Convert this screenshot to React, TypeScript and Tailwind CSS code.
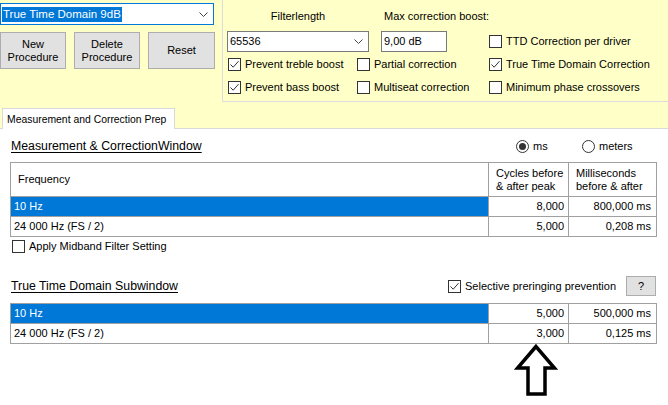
import React from "react";

function Check({ checked }: { checked?: boolean }) {
  return (
    <span className="w-[13px] h-[13px] border border-[#333] bg-white flex items-center justify-center shrink-0">
      {checked && (
        <svg width="11" height="11" viewBox="0 0 11 11">
          <path d="M1.5 5.5 L4.2 8.2 L9.5 2.2" stroke="#333" fill="none" strokeWidth="1" />
        </svg>
      )}
    </span>
  );
}

function CheckItem({ label, checked, className = "" }: { label: string; checked?: boolean; className?: string }) {
  return (
    <div className={`flex items-center gap-[4px] ${className}`}>
      <Check checked={checked} />
      <span className="whitespace-nowrap">{label}</span>
    </div>
  );
}

function Radio({ label, checked, className = "" }: { label: string; checked?: boolean; className?: string }) {
  return (
    <div className={`flex items-center gap-[4px] ${className}`}>
      <span className="w-[13px] h-[13px] rounded-full border border-[#333] bg-white flex items-center justify-center shrink-0">
        {checked && <span className="w-[7px] h-[7px] rounded-full bg-[#333]" />}
      </span>
      <span>{label}</span>
    </div>
  );
}

function Chevron() {
  return (
    <svg width="9" height="5" viewBox="0 0 9 5" className="ml-auto shrink-0">
      <path d="M0.5 0.5 L4.5 4.5 L8.5 0.5" stroke="#444" fill="none" strokeWidth="1" />
    </svg>
  );
}

function WinButton({ children, className = "" }: { children: React.ReactNode; className?: string }) {
  return (
    <div
      className={`bg-[#e1e1e1] border border-[#adadad] flex items-center justify-center text-center leading-[13px] ${className}`}
    >
      {children}
    </div>
  );
}

type Row = { freq: string; cycles: string; ms: string; selected?: boolean };

function FreqTable({ rows, header }: { rows: Row[]; header?: boolean }) {
  return (
    <div className="ml-[10px] w-[647px] border border-[#a0a0a0]">
      {header && (
        <div className="flex h-[34px] border-b border-[#a0a0a0]">
          <div className="w-[477px] flex items-center pl-[7px]">Frequency</div>
          <div className="w-[80px] border-l border-[#a0a0a0] pl-[7px] flex flex-col justify-center leading-[13px]">
            <span>Cycles before</span>
            <span>&amp; after peak</span>
          </div>
          <div className="w-[88px] border-l border-[#a0a0a0] pl-[7px] flex flex-col justify-center leading-[13px]">
            <span>Milliseconds</span>
            <span>before &amp; after</span>
          </div>
        </div>
      )}
      {rows.map((r, i) => (
        <div
          key={i}
          className={`flex ${i < rows.length - 1 ? "h-[20px] border-b border-[#a0a0a0]" : "h-[19px]"}`}
        >
          <div
            className={`w-[477px] flex items-center pl-[3px] ${r.selected ? "bg-[#0078d7] text-white" : ""}`}
          >
            {r.freq}
          </div>
          <div className="w-[80px] border-l border-[#a0a0a0] flex items-center justify-end pr-[4px]">
            {r.cycles}
          </div>
          <div className="w-[88px] border-l border-[#a0a0a0] flex items-center justify-end pr-[5px]">
            {r.ms}
          </div>
        </div>
      ))}
    </div>
  );
}

export default function App() {
  return (
    <div className="w-[668px] h-[405px] overflow-hidden bg-white text-[11px] leading-[13px] text-black font-['Liberation_Sans',Arial,sans-serif]">
      {/* top yellow area */}
      <div className="bg-[#ffffc8]">
        <div className="flex h-[102px]">
          <div className="w-[222px] shrink-0 pt-[3px]">
            <div className="w-[214px] h-[22px] border border-[#0078d7] bg-white flex items-center pl-[1px] pr-[5px]">
              <span className="bg-[#0078d7] text-white px-[1px] leading-[15px] text-[11.5px]">True Time Domain 9dB</span>
              <Chevron />
            </div>
            <div className="flex gap-[8px] mt-[7px]">
              <WinButton className="w-[66px] h-[37px]">
                New
                <br />
                Procedure
              </WinButton>
              <WinButton className="w-[66px] h-[37px]">
                Delete
                <br />
                Procedure
              </WinButton>
              <WinButton className="w-[67px] h-[37px]">Reset</WinButton>
            </div>
          </div>

          <div className="flex-1 border-l border-b border-[#dcdcdc]">
            <div className="flex pt-[10px]">
              <div className="ml-[4px] w-[142px] text-center">Filterlength</div>
              <div className="ml-[15px]">Max correction boost:</div>
            </div>
            <div className="flex items-center mt-[8px]">
              <div className="ml-[4px] w-[142px] h-[21px] border border-[#7a7a7a] bg-white flex items-center pl-[2px] pr-[5px]">
                <span>65536</span>
                <Chevron />
              </div>
              <div className="ml-[12px] w-[66px] h-[21px] border border-[#7a7a7a] bg-white flex items-center pl-[2px]">
                9,00 dB
              </div>
              <CheckItem className="ml-[42px]" label="TTD Correction per driver" />
            </div>
            <div className="flex h-[23px] mt-[1px] items-center">
              <CheckItem className="w-[134px] pl-[5px]" label="Prevent treble boost" checked />
              <CheckItem className="w-[132px]" label="Partial correction" />
              <CheckItem label="True Time Domain Correction" checked />
            </div>
            <div className="flex h-[23px] items-center">
              <CheckItem className="w-[134px] pl-[5px]" label="Prevent bass boost" checked />
              <CheckItem className="w-[132px]" label="Multiseat correction" />
              <CheckItem label="Minimum phase crossovers" />
            </div>
          </div>
        </div>

        {/* tab strip */}
        <div className="h-[27px] flex items-end border-b border-[#d9d9d9]">
          <div className="ml-[2px] -mb-px w-[173px] h-[21px] bg-white border border-b-0 border-[#d9d9d9] flex items-center pl-[4px] whitespace-nowrap text-[10.4px]">
            Measurement and Correction Prep
          </div>
        </div>
      </div>

      {/* tab page */}
      <div className="flex items-center h-[14px] mt-[10px]">
        <div className="w-[516px] pl-[11px] text-[12.3px] underline underline-offset-2">
          Measurement &amp; CorrectionWindow
        </div>
        <Radio className="w-[66px]" label="ms" checked />
        <Radio label="meters" />
      </div>

      <div className="mt-[9px]">
        <FreqTable
          header
          rows={[
            { freq: "10 Hz", cycles: "8,000", ms: "800,000 ms", selected: true },
            { freq: "24 000 Hz (FS / 2)", cycles: "5,000", ms: "0,208 ms" },
          ]}
        />
      </div>

      <CheckItem className="ml-[12px] mt-[3px] h-[13px]" label="Apply Midband Filter Setting" />

      <div className="flex items-center h-[20px] mt-[23px]">
        <div className="w-[448px] pl-[11px] text-[12.3px] underline underline-offset-2">True Time Domain Subwindow</div>
        <CheckItem className="w-[178px]" label="Selective preringing prevention" checked />
        <WinButton className="w-[30px] h-[20px]">?</WinButton>
      </div>

      <div className="mt-[7px]">
        <FreqTable
          rows={[
            { freq: "10 Hz", cycles: "5,000", ms: "500,000 ms", selected: true },
            { freq: "24 000 Hz (FS / 2)", cycles: "3,000", ms: "0,125 ms" },
          ]}
        />
      </div>

      <svg width="44" height="53" viewBox="0 0 44 53" className="block ml-[514px]">
        <path
          d="M22 2.5 L3.5 24 L14 24 L14 50 L31 50 L31 24 L40.5 24 Z"
          fill="white"
          stroke="black"
          strokeWidth="3.5"
          strokeLinejoin="miter"
        />
      </svg>
    </div>
  );
}
